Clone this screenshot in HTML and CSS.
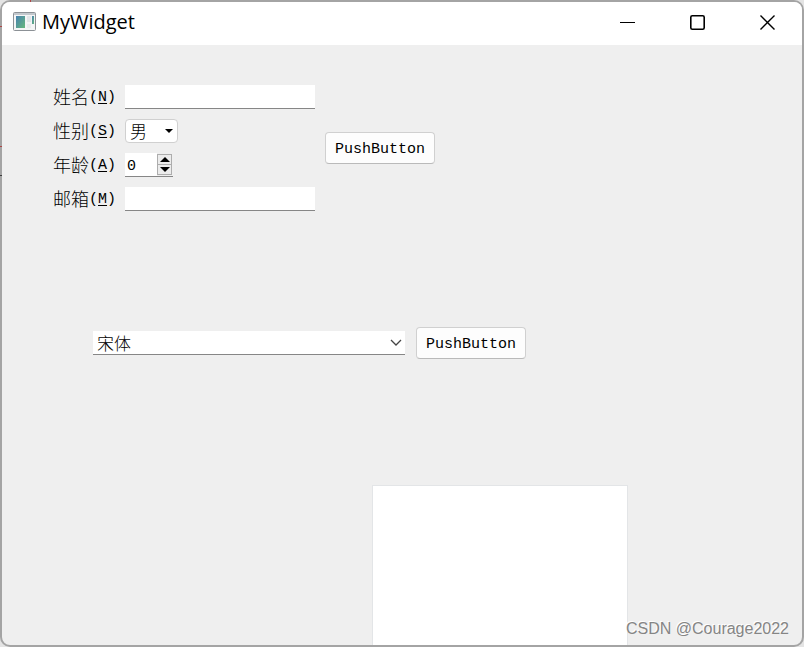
FILE: index.html
```html
<!DOCTYPE html>
<html lang="zh-CN">
<head>
    <meta charset="UTF-8">
    <meta name="viewport" content="width=device-width, initial-scale=1.0">
    <title>MyWidget</title>
    <link rel="stylesheet" href="styles.css">
</head>
<body>

    <div class="window">
        <header class="title-bar">
            <svg class="app-icon" width="24" height="20" viewBox="0 0 24 20">
                <defs>
                    <linearGradient id="pane" x1="0" y1="0" x2="1" y2="1">
                        <stop offset="0" stop-color="#4781b0"/>
                        <stop offset="1" stop-color="#67b87c"/>
                    </linearGradient>
                </defs>
                <rect x="0.5" y="0.5" width="22" height="18" rx="1" fill="#f4f5f6" stroke="#8c9196"/>
                <path d="M1 2h21" stroke="#c3c8cd" stroke-width="2"/>
                <rect x="3" y="4" width="9" height="12" fill="url(#pane)"/>
                <rect x="14" y="4" width="4" height="6" fill="#e2e5e8"/>
                <rect x="14" y="12" width="4" height="4" fill="#e9ebed"/>
                <rect x="19" y="4" width="2" height="8" fill="url(#pane)"/>
            </svg>
            <h1 class="title">MyWidget</h1>
            <div class="window-buttons">
                <button type="button" class="window-button" aria-label="Minimize">
                    <svg width="16" height="16" viewBox="0 0 16 16"><path d="M0 8.5h15"/></svg>
                </button>
                <button type="button" class="window-button" aria-label="Maximize">
                    <svg width="16" height="16" viewBox="0 0 16 16"><rect x="0.8" y="1.8" width="13.4" height="13.4" rx="1.5" stroke-width="1.6"/></svg>
                </button>
                <button type="button" class="window-button" aria-label="Close">
                    <svg width="16" height="16" viewBox="0 0 16 16"><path d="M.5 1.5l14 14M14.5 1.5l-14 14" stroke-width="1.4"/></svg>
                </button>
            </div>
        </header>

        <main class="content">
            <form class="person-row">
                <div class="form-grid">
                    <label for="name">姓名<span class="key">(<u>N</u>)</span></label>
                    <input class="line-edit" type="text" id="name" accesskey="n">

                    <label for="sex">性别<span class="key">(<u>S</u>)</span></label>
                    <div class="combo sex-combo">
                        <select id="sex" accesskey="s">
                            <option>男</option>
                            <option>女</option>
                        </select>
                        <svg class="combo-arrow" width="8" height="4" viewBox="0 0 8 4"><path d="M0 0h8L4 4z"/></svg>
                    </div>

                    <label for="age">年龄<span class="key">(<u>A</u>)</span></label>
                    <div class="spin-box">
                        <input type="number" id="age" value="0" min="0" accesskey="a">
                        <div class="spin-buttons">
                            <button type="button" aria-label="Up"><svg width="10" height="5" viewBox="0 0 10 5"><path d="M0 5L5 0l5 5z"/></svg></button>
                            <button type="button" aria-label="Down"><svg width="10" height="5" viewBox="0 0 10 5"><path d="M0 0h10L5 5z"/></svg></button>
                        </div>
                    </div>

                    <label for="mail">邮箱<span class="key">(<u>M</u>)</span></label>
                    <input class="line-edit" type="text" id="mail" accesskey="m">
                </div>
                <button type="button" class="push-button">PushButton</button>
            </form>

            <div class="font-row">
                <div class="combo font-combo">
                    <select id="font" aria-label="Font">
                        <option>宋体</option>
                    </select>
                    <svg class="combo-arrow" width="12" height="8" viewBox="0 0 12 8"><path d="M1 1l5 5 5-5"/></svg>
                </div>
                <button type="button" class="push-button">PushButton</button>
            </div>

            <div class="view"></div>
        </main>

        <span class="watermark">CSDN @Courage2022</span>
    </div>

</body>
</html>
```
FILE: styles.css
```css
* {
    box-sizing: border-box;
}

body {
    margin: 0;
    background-color: #e4e4e4;
    /* faint ticks behind the window edge */
    background-image:
        linear-gradient(#f06060, #f06060),
        linear-gradient(#f06060, #f06060),
        linear-gradient(#f06060, #f06060),
        linear-gradient(#555, #555);
    background-size: 1px 2px, 2px 1px, 2px 1px, 2px 1px;
    background-position: 30px 0, 0 26px, 0 146px, 0 175px;
    background-repeat: no-repeat;
    font-family: "Liberation Mono", "Noto Sans CJK SC", monospace;
    font-size: 15px;
    color: #000;
}

button,
input,
select {
    margin: 0;
    font: inherit;
    color: inherit;
}

.window {
    position: relative;
    display: flex;
    flex-direction: column;
    min-height: 100vh;
    border: 2px solid rgba(0, 0, 0, 0.28);
    border-radius: 10px;
    background: #efefef;
    background-clip: padding-box;
    overflow: hidden;
}

.title-bar {
    display: flex;
    align-items: center;
    height: 43px;
    padding: 0 12px 3px 11px;
    background: #fff;
}

.title {
    flex: 1;
    margin: 0 0 0 5px;
    font-family: "Open Sans", "Noto Sans", sans-serif;
    font-size: 20px;
    font-weight: 400;
    line-height: 24px;
}

.window-buttons {
    display: flex;
    gap: 22px;
}

.window-button {
    display: flex;
    align-items: center;
    justify-content: center;
    width: 48px;
    height: 32px;
    padding: 0;
    border: 0;
    background: none;
}

.window-button:last-child {
    margin-right: -2px;
}

.window-button svg {
    fill: none;
    stroke: #000;
}

.content {
    display: flex;
    flex: 1;
    flex-direction: column;
    align-items: flex-start;
    padding: 40px 20px 0 51px;
}

.person-row {
    display: flex;
    align-items: center;
    gap: 10px;
}

.form-grid {
    display: grid;
    grid-template-columns: 62px 190px;
    grid-auto-rows: 24px;
    gap: 10px;
    align-items: center;
}

.form-grid label {
    display: flex;
    align-items: center;
    height: 24px;
    font-family: "Noto Sans CJK SC", sans-serif;
    font-size: 18px;
    font-weight: 300;
    line-height: 22px;
    padding-bottom: 2px;
    white-space: nowrap;
}

.key {
    padding-top: 4px;
    font-family: "Liberation Mono", monospace;
    font-size: 15px;
    font-weight: 400;
}

.key u {
    text-underline-offset: 2px;
}

.line-edit {
    width: 100%;
    height: 24px;
    padding: 0 4px;
    border: 0;
    border-bottom: 1px solid #868686;
    background: #fff;
}

.combo {
    position: relative;
}

.combo select {
    display: block;
    width: 100%;
    height: 24px;
    padding: 0 4px;
    appearance: none;
    background: #fff;
    font-family: "Noto Sans CJK SC", sans-serif;
    font-size: 17px;
    font-weight: 300;
    line-height: 20px;
}

.combo-arrow {
    position: absolute;
    top: 10px;
    right: 5px;
    pointer-events: none;
}

.sex-combo {
    width: 53px;
}

.sex-combo select {
    border: 1px solid #d0d0d0;
    border-radius: 4px;
}

.font-combo {
    width: 312px;
}

.font-combo select {
    border: 0;
    border-bottom: 1px solid #868686;
}

.font-combo .combo-arrow {
    top: 8px;
    right: 3px;
    fill: none;
    stroke: #444;
    stroke-width: 1.3;
}

.spin-box {
    display: flex;
    width: 48px;
    height: 24px;
    border-bottom: 1px solid #868686;
    background: #fff;
}

.spin-box input {
    flex: 1;
    min-width: 0;
    padding: 3px 2px 0;
    border: 0;
    background: none;
    appearance: textfield;
}

.spin-box input::-webkit-inner-spin-button {
    appearance: none;
    margin: 0;
}

.spin-buttons {
    display: flex;
    flex-direction: column;
    width: 16px;
    padding: 1px 1px 1px 0;
    background: #efefef;
}

.spin-buttons button {
    display: flex;
    flex: 1;
    align-items: center;
    justify-content: center;
    min-height: 0;
    padding: 0;
    border: 1px solid #adadad;
    background: #ececec;
}

.spin-buttons button + button {
    border-top: 0;
}

.push-button {
    width: 110px;
    height: 32px;
    padding: 2px 0 0;
    border: 1px solid #d0d0d0;
    border-bottom-color: #bababa;
    border-radius: 4px;
    background: #fdfdfd;
}

.font-row {
    display: flex;
    align-items: center;
    gap: 11px;
    margin: 116px 0 0 40px;
}

.view {
    flex: 1;
    width: 256px;
    min-height: 120px;
    margin: 126px 0 0 319px;
    border: 1px solid #e3e5e7;
    border-bottom: 0;
    background: #fff;
}

.watermark {
    position: absolute;
    right: 13px;
    bottom: 7px;
    font-family: "Liberation Sans", sans-serif;
    font-size: 16px;
    color: #858585;
    text-shadow: -1px -1px 0 #fff;
}
```
